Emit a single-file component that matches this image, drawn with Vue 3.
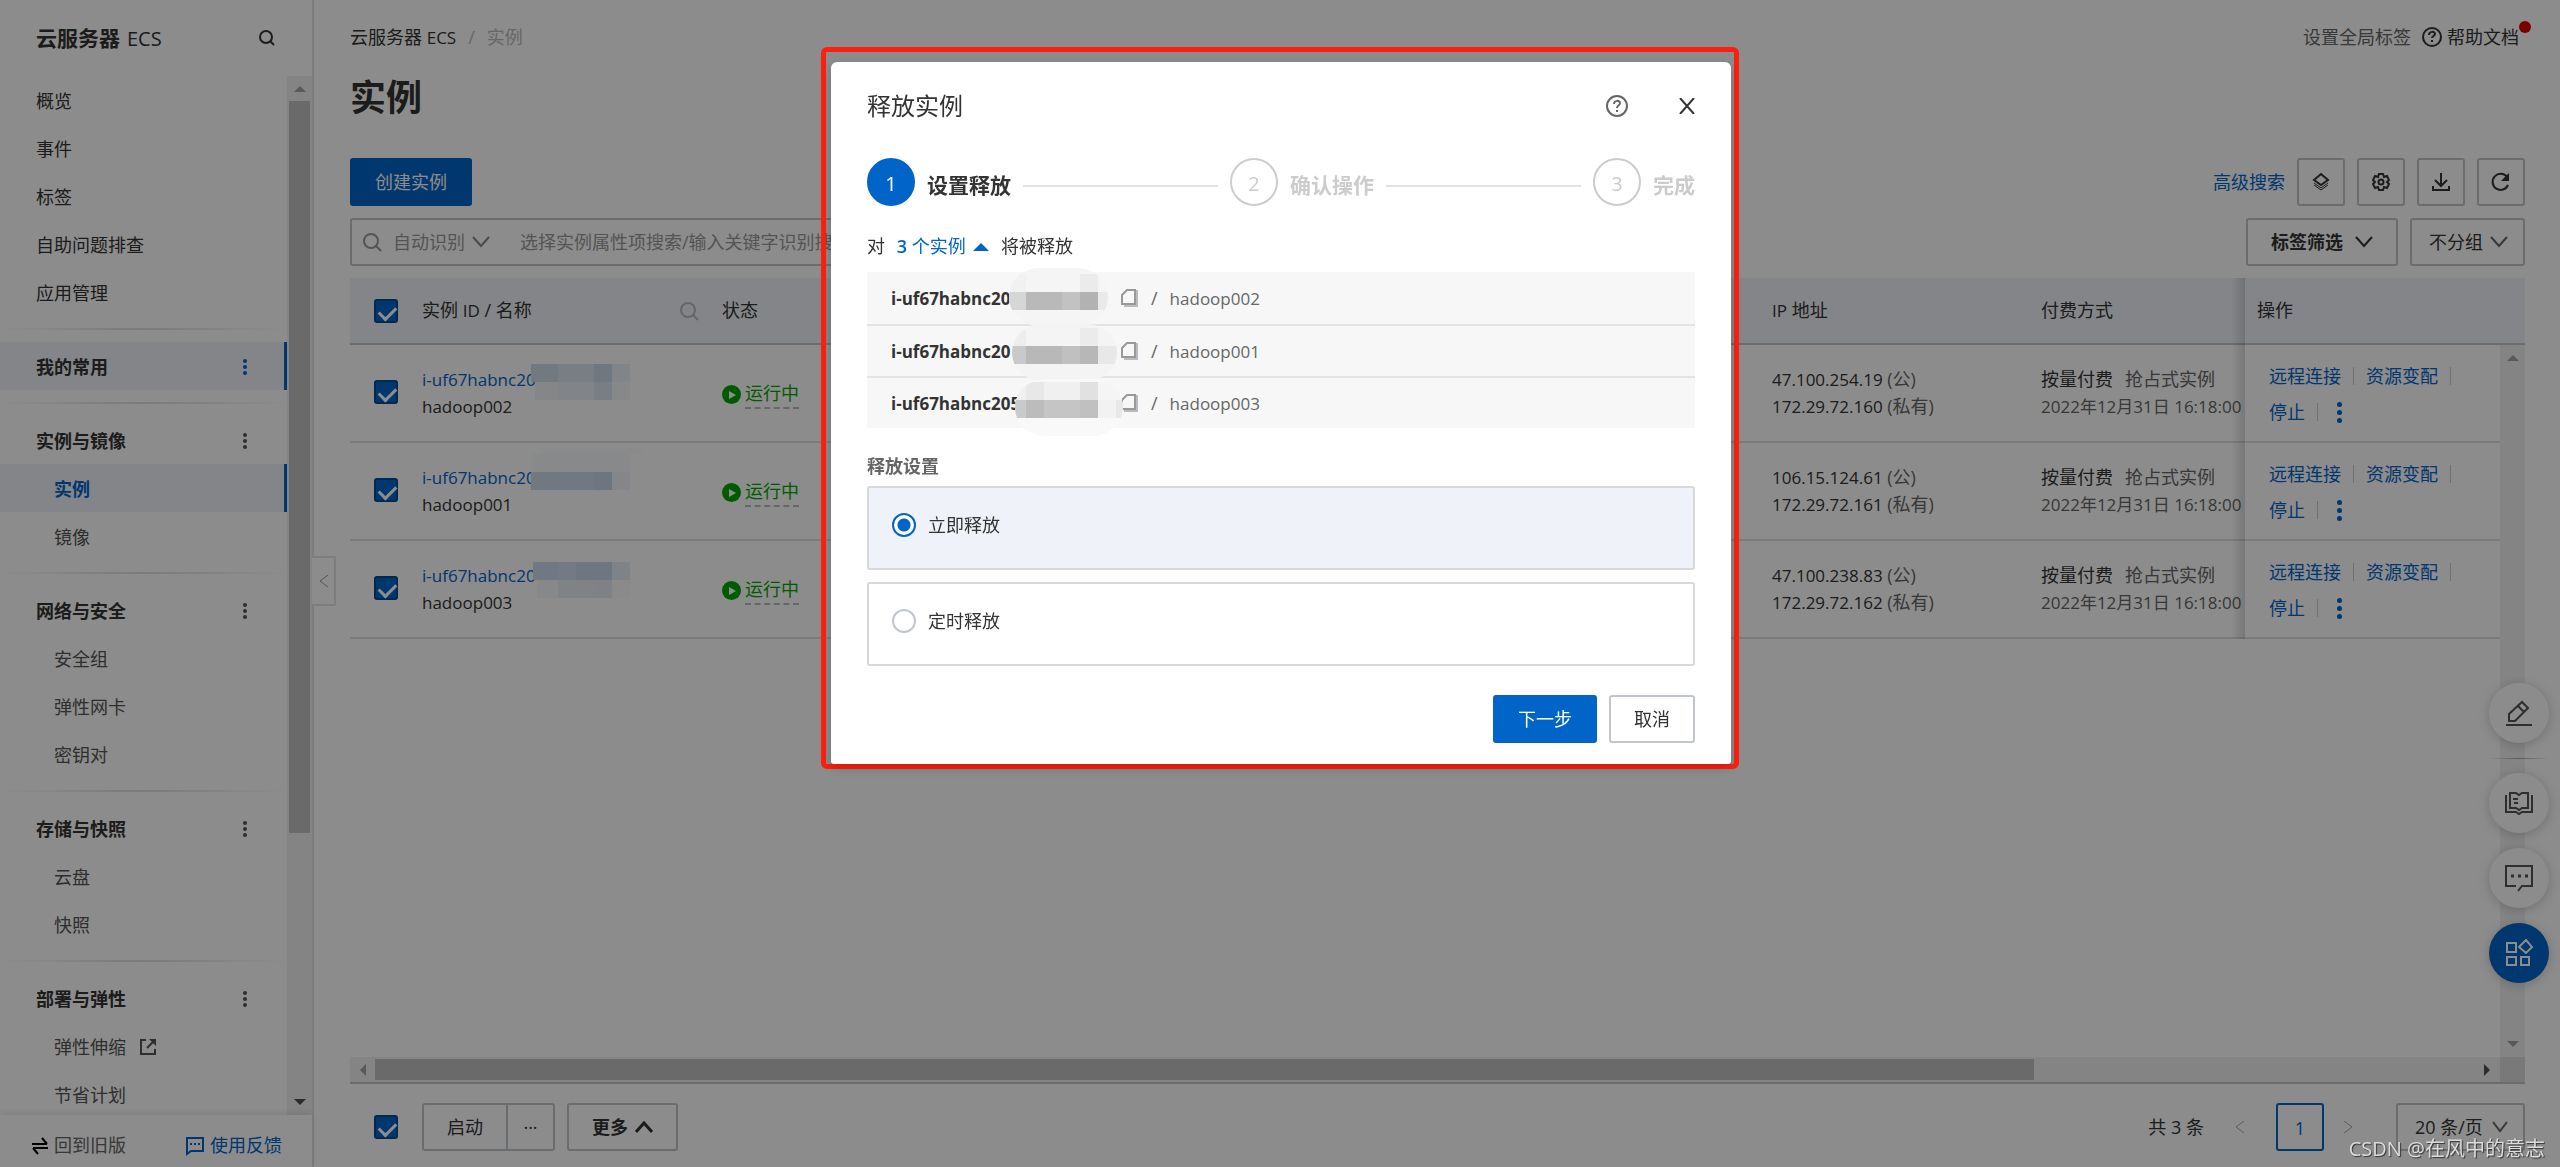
<script setup>
import { ref } from 'vue'

const topLinks = ['概览', '事件', '标签', '自助问题排查', '应用管理']

const groups = [
  { title: '我的常用', active: true, items: [] },
  { title: '实例与镜像', items: [{ name: '实例', active: true }, { name: '镜像' }] },
  { title: '网络与安全', items: [{ name: '安全组' }, { name: '弹性网卡' }, { name: '密钥对' }] },
  { title: '存储与快照', items: [{ name: '云盘' }, { name: '快照' }] },
  { title: '部署与弹性', items: [{ name: '弹性伸缩', external: true }, { name: '节省计划' }] },
]

// Masked id tails: each cell is [x, y, width, height, fill] on the mask canvas.
const instances = ref([
  {
    name: 'hadoop002', publicIp: '47.100.254.19', privateIp: '172.29.72.160', checked: true,
    mask: [
      [0, 19, 27, 18, '#cfdceb'], [27, 19, 36, 18, '#dde5f1'], [63, 19, 18, 18, '#cbdbe9'], [81, 19, 18, 18, '#ebf1f8'],
      [4, 37, 23, 18, '#f0f4f8'], [27, 37, 36, 18, '#ecf1f8'], [63, 37, 18, 18, '#dde6f0'], [81, 37, 18, 18, '#f5f7fb'],
    ],
  },
  {
    name: 'hadoop001', publicIp: '106.15.124.61', privateIp: '172.29.72.161', checked: true,
    mask: [
      [12, 5, 98, 6, '#fcfcfc'], [2, 11, 97, 18, '#f8fafb'],
      [0, 29, 27, 18, '#ccdaea'], [27, 29, 36, 18, '#cfdbec'], [63, 29, 18, 18, '#c6d8e8'], [81, 29, 18, 18, '#f2f5fb'],
    ],
  },
  {
    name: 'hadoop003', publicIp: '47.100.238.83', privateIp: '172.29.72.162', checked: true,
    mask: [
      [2, 21, 25, 18, '#ccdcee'], [27, 21, 18, 18, '#d2dfef'], [45, 21, 36, 18, '#c9d8ea'], [81, 21, 18, 18, '#e6eef6'],
      [6, 39, 21, 18, '#f5f8fa'], [27, 39, 36, 18, '#eaeff4'], [63, 39, 18, 18, '#e6edf4'], [81, 39, 18, 18, '#fbfcfd'],
    ],
  },
])

const releaseList = [
  { id: 'i-uf67habnc20', name: 'hadoop002' },
  { id: 'i-uf67habnc20', name: 'hadoop001' },
  { id: 'i-uf67habnc205', name: 'hadoop003' },
]

const listMask = [
  { x: 0, y: 0, w: 99, h: 58, fill: '#f5f5f5', cells: [
    [0, 6, 17, 18, '#f1f1f1'], [53, 6, 18, 18, '#f5f5f5'], [71, 6, 18, 18, '#ebebeb'],
    [0, 24, 17, 18, '#d6d6d6'], [17, 24, 36, 18, '#b9b9b9'], [53, 24, 18, 18, '#c2c2c2'], [71, 24, 18, 18, '#b2b2b2'], [89, 24, 10, 18, '#e9e9e9'] ] },
  { x: 3, y: 56, w: 105, h: 57, fill: '#f4f4f4', cells: [
    [3, 60, 14, 18, '#ededed'], [71, 60, 18, 18, '#ebebeb'],
    [3, 78, 14, 18, '#c9c9c9'], [17, 78, 36, 18, '#b8b8b8'], [53, 78, 18, 18, '#c0c0c0'], [71, 78, 18, 18, '#b7b7b7'], [89, 78, 19, 18, '#e8e8e8'] ] },
  { x: 6, y: 111, w: 108, h: 57, fill: '#f9f9f9', cells: [
    [6, 114, 11, 18, '#f0f0f0'], [17, 114, 18, 18, '#e8e8e8'], [35, 114, 36, 18, '#f0f0f0'], [71, 114, 18, 18, '#e1e1e1'], [89, 114, 25, 18, '#f5f5f5'],
    [6, 132, 11, 18, '#cacaca'], [17, 132, 18, 18, '#bcbcbc'], [35, 132, 36, 18, '#c5c5c5'], [71, 132, 18, 18, '#c0c0c0'], [89, 132, 18, 18, '#f2f2f2'], [107, 132, 7, 18, '#e8e8e8'] ] },
]

const allChecked = ref(true)
const release = ref('now')
</script>

<template>
  <div class="shell">
    <aside class="sidebar">
      <header class="side-head">
        <strong>云服务器</strong><span class="side-ecs">ECS</span>
        <button class="plain side-search" aria-label="搜索">
          <svg width="18" height="18" viewBox="0 0 18 18" fill="none" stroke="#333" stroke-width="2"><circle cx="8" cy="8" r="6" /><path d="M12 12l4 4" /></svg>
        </button>
      </header>

      <div class="side-body">
        <nav class="nav">
          <a v-for="l in topLinks" :key="l" href="#" class="nav-link">{{ l }}</a>
          <template v-for="g in groups" :key="g.title">
            <div class="divider"></div>
            <div class="nav-title" :class="{ active: g.active }">
              <span>{{ g.title }}</span>
              <button class="plain dots" :aria-label="g.title + ' 更多'"><i></i><i></i><i></i></button>
            </div>
            <a v-for="it in g.items" :key="it.name" href="#" class="nav-link sub" :class="{ active: it.active }">
              {{ it.name }}
              <svg v-if="it.external" width="18" height="18" viewBox="0 0 18 18" fill="none" stroke="#555" stroke-width="2"><path d="M7 2H2v14h14v-5M8 10l7-7" /><path d="M10 1h7v7z" fill="#555" stroke="none" /></svg>
            </a>
          </template>
        </nav>
        <div class="vbar">
          <i class="arr up"></i>
          <div class="vtrack"><div class="vthumb"></div></div>
          <i class="arr down on"></i>
        </div>
      </div>

      <footer class="side-foot">
        <a href="#" class="old">
          <svg width="18" height="18" viewBox="0 0 18 18" fill="none" stroke="#000" stroke-width="2"><path d="M1 7h15M11 1l5 6M17 11H2M7 17l-5-6" /></svg>
          回到旧版
        </a>
        <a href="#" class="feedback">
          <svg width="20" height="20" viewBox="0 0 20 20" fill="none" stroke="#0064c8" stroke-width="2"><path d="M2 2h16v13H6l-4 3z" /><path d="M5 8h2M9 8h2M13 8h2" /></svg>
          使用反馈
        </a>
      </footer>
      <button class="collapse" aria-label="收起">
        <svg width="10" height="14" viewBox="0 0 10 14" fill="none" stroke="#999" stroke-width="1"><path d="M9 1L1 7l8 6" /></svg>
      </button>
    </aside>

    <main class="main">
      <div class="crumbs">
        <a href="#">云服务器 <span class="en">ECS</span></a><span class="sep">/</span><span class="cur">实例</span>
        <div class="help">
          <a href="#" class="muted">设置全局标签</a>
          <svg width="20" height="20" viewBox="0 0 20 20" fill="none" stroke="#333" stroke-width="2"><circle cx="10" cy="10" r="9" /><path d="M7 8c0-4 6-4 6-1 0 2-3 2-3 4M10 13v2" /></svg>
          <a href="#" class="doc">帮助文档<i class="red-dot"></i></a>
        </div>
      </div>

      <h1>实例</h1>

      <div class="bar tools">
        <button class="btn primary">创建实例</button>
        <span class="grow"></span>
        <a href="#" class="blue">高级搜索</a>
        <button class="btn icon" aria-label="标签">
          <svg width="20" height="20" viewBox="0 0 20 20" fill="none" stroke="#333" stroke-width="2"><path d="M10 2l7 6-7 5-7-5z" /><path d="M3 11l7 5 7-5" stroke-width="1" /><path d="M3 13l7 5 7-5" stroke-width="1" /></svg>
        </button>
        <button class="btn icon" aria-label="设置">
          <svg width="20" height="20" viewBox="0 0 20 20" fill="none" stroke="#333" stroke-width="2"><path d="M8 2h4l1 3 3-1 2 4-2 2 2 2-2 4-3-1-1 3H8l-1-3-3 1-2-4 2-2-2-2 2-4 3 1z" /><circle cx="10" cy="10" r="2.500" /></svg>
        </button>
        <button class="btn icon" aria-label="导出">
          <svg width="20" height="20" viewBox="0 0 20 20" fill="none" stroke="#333" stroke-width="2"><path d="M10 1v12M4 8l6 6 6-6M2 14v4h16v-4" /></svg>
        </button>
        <button class="btn icon" aria-label="刷新">
          <svg width="20" height="20" viewBox="0 0 20 20" fill="none" stroke="#333" stroke-width="2"><path d="M17 13a8 8 0 1 1-1-8" /><path d="M18 1v8h-8z" fill="#333" stroke="none" /></svg>
        </button>
      </div>

      <div class="bar">
        <div class="search">
          <svg width="20" height="20" viewBox="0 0 20 20" fill="none" stroke="#999" stroke-width="2"><circle cx="9" cy="9" r="7" /><path d="M14 14l5 5" /></svg>
          <div class="pick auto">
            <select aria-label="搜索方式"><option>自动识别</option></select>
            <svg width="18" height="12" viewBox="0 0 18 12" fill="none" stroke="#888" stroke-width="2"><path d="M1 1l8 9 8-9" /></svg>
          </div>
          <input type="text" aria-label="搜索实例" placeholder="选择实例属性项搜索/输入关键字识别搜索" />
        </div>
        <span class="grow"></span>
        <button class="btn tagf">标签筛选
          <svg width="18" height="12" viewBox="0 0 18 12" fill="none" stroke="#333" stroke-width="2"><path d="M1 1l8 9 8-9" /></svg>
        </button>
        <div class="pick boxed group">
          <select aria-label="分组"><option>不分组</option></select>
          <svg width="18" height="12" viewBox="0 0 18 12" fill="none" stroke="#666" stroke-width="2"><path d="M1 1l8 9 8-9" /></svg>
        </div>
      </div>

      <section class="grid">
        <table>
          <colgroup><col class="c1" /><col class="c2" /><col /><col class="c4" /><col class="c5" /><col class="c6" /><col class="c7" /></colgroup>
          <thead>
            <tr>
              <th class="chk"><input v-model="allChecked" type="checkbox" aria-label="全选" /></th>
              <th>
                <div class="th-id"><span>实例 <span class="en md">ID</span> / 名称</span>
                  <svg width="20" height="20" viewBox="0 0 20 20" fill="none" stroke="#bbb" stroke-width="2"><circle cx="9" cy="9" r="7" /><path d="M14 14l5 5" /></svg>
                </div>
              </th>
              <th>状态</th>
              <th><span class="en md">IP</span> 地址</th>
              <th>付费方式</th>
              <th class="fixed">操作</th>
              <th></th>
            </tr>
          </thead>
          <tbody>
            <tr v-for="r in instances" :key="r.name">
              <td class="chk"><input v-model="r.checked" type="checkbox" :aria-label="r.name" /></td>
              <td class="idcell">
                <a href="#" class="blue en">i-uf67habnc20</a>
                <div class="en">{{ r.name }}</div>
                <svg class="mask" width="110" height="60" viewBox="0 0 110 60" shape-rendering="crispEdges"><rect v-for="(c, i) in r.mask" :key="i" :x="c[0]" :y="c[1]" :width="c[2]" :height="c[3]" :fill="c[4]" /></svg>
              </td>
              <td class="status">
                <svg width="19" height="19" viewBox="0 0 19 19"><circle cx="9.500" cy="9.500" r="9.500" fill="#00a700" /><path d="M7 6l7 4-7 4z" fill="#fff" /></svg>
                <span>运行中</span>
              </td>
              <td class="two">
                <div><span class="en">{{ r.publicIp }}</span> <span class="muted">(公)</span></div>
                <div><span class="en">{{ r.privateIp }}</span> <span class="muted">(私有)</span></div>
              </td>
              <td class="two">
                <div>按量付费<span class="muted spot">抢占式实例</span></div>
                <div class="muted en">2022年12月31日 16:18:00</div>
              </td>
              <td class="fixed ops">
                <div><a href="#">远程连接</a><i></i><a href="#">资源变配</a><i></i></div>
                <div><a href="#">停止</a><i></i><button class="plain dots big" aria-label="更多操作"><i></i><i></i><i></i></button></div>
              </td>
              <td class="gutter"></td>
            </tr>
          </tbody>
        </table>
        <div class="vbar table-v"><i class="arr up"></i><div class="vtrack"></div><i class="arr down"></i></div>
      </section>
      <div class="hbar">
        <i class="arr left"></i>
        <div class="htrack"><div class="hthumb"></div></div>
        <i class="arr right on"></i>
        <b class="corner"></b>
      </div>

      <footer class="foot">
        <input v-model="allChecked" type="checkbox" aria-label="全选本页" />
        <div class="pair"><button class="btn start">启动</button><button class="btn more3" aria-label="更多启动项">···</button></div>
        <button class="btn more">更多
          <svg width="18" height="12" viewBox="0 0 18 12" fill="none" stroke="#333" stroke-width="3"><path d="M1 11l8-9 8 9" /></svg>
        </button>
        <span class="grow"></span>
        <span class="total">共 3 条</span>
        <button class="plain" aria-label="上一页"><svg width="10" height="14" viewBox="0 0 10 14" fill="none" stroke="#aaa" stroke-width="1"><path d="M9 1L1 7l8 6" /></svg></button>
        <button class="btn page">1</button>
        <button class="plain" aria-label="下一页"><svg width="10" height="14" viewBox="0 0 10 14" fill="none" stroke="#aaa" stroke-width="1"><path d="M1 1l8 6-8 6" /></svg></button>
        <div class="pick boxed size">
          <select aria-label="每页条数"><option>20 条/页</option></select>
          <svg width="16" height="12" viewBox="0 0 16 12" fill="none" stroke="#666" stroke-width="2"><path d="M1 1l7 9 7-9" /></svg>
        </div>
      </footer>
    </main>

    <div class="dock">
      <button aria-label="编辑"><svg width="28" height="28" viewBox="0 0 28 28" fill="none" stroke="#555" stroke-width="2"><path d="M4 22v-7L17 3l6 6-13 13zM13 7l6 6M1 26h26" /></svg></button>
      <div class="dock-line"></div>
      <button aria-label="文档"><svg width="28" height="28" viewBox="0 0 28 28" fill="none" stroke="#555" stroke-width="2"><path d="M5 4h6l3 2 3-2h6v15h-6l-3 2-3-2H5z" /><path d="M1 6v17h10l3 2 3-2h10V6M8 10h5M9 14h4" /></svg></button>
      <button aria-label="消息"><svg width="28" height="28" viewBox="0 0 28 28" fill="none" stroke="#555" stroke-width="2"><path d="M11 22H1V2h26v20H17l-4 5" /><path d="M6 12h3M13 12h3M20 12h3" stroke-width="3" /></svg></button>
      <button class="on" aria-label="应用"><svg width="28" height="28" viewBox="0 0 28 28" fill="none" stroke="#fff" stroke-width="2"><path d="M2 4h9v9H2zM2 18h9v8H2zM16 18h8v8h-8zM21 1l6 7-6 6-7-6z" /></svg></button>
    </div>

    <div class="overlay">
      <div class="frame">
        <form class="dialog" role="dialog" aria-labelledby="dlg-title" @submit.prevent>
          <header class="dlg-head">
            <h2 id="dlg-title">释放实例</h2>
            <button type="button" class="plain" aria-label="帮助"><svg width="22" height="22" viewBox="0 0 22 22" fill="none" stroke="#666" stroke-width="2"><circle cx="11" cy="11" r="10" /><path d="M8 9c0-4 6-4 6-1 0 3-3 2-3 5M11 15v2" /></svg></button>
            <button type="button" class="plain close" aria-label="关闭"><svg width="16" height="16" viewBox="0 0 16 16" fill="none" stroke="#333" stroke-width="2"><path d="M1 0l14 16M15 0L1 16" /></svg></button>
          </header>

          <ol class="steps">
            <li class="num on">1</li><li class="lab on">设置释放</li><li class="line"></li>
            <li class="num">2</li><li class="lab">确认操作</li><li class="line"></li>
            <li class="num">3</li><li class="lab">完成</li>
          </ol>

          <p class="sum">对 <a href="#"><b>3</b> 个实例 <i></i></a> 将被释放</p>

          <div class="list">
            <div v-for="r in releaseList" :key="r.name" class="row">
              <b class="en">{{ r.id }}</b>
              <button type="button" class="plain" aria-label="复制"><svg width="18" height="18" viewBox="0 0 18 18" fill="none" stroke="#999" stroke-width="2"><path d="M6 1h8v14H1V6z" /><path d="M16 1v16H3" stroke="#bbb" /></svg></button>
              <span class="slash">/</span><span class="en name">{{ r.name }}</span>
            </div>
            <svg class="list-mask" width="116" height="170" viewBox="0 0 116 170">
              <clipPath v-for="(m, i) in listMask" :id="'m' + i" :key="'c' + i"><rect :x="m.x" :y="m.y" :width="m.w" :height="m.h" rx="30" /></clipPath>
              <g v-for="(m, i) in listMask" :key="'g' + i" :clip-path="'url(#m' + i + ')'">
                <rect :x="m.x" :y="m.y" :width="m.w" :height="m.h" :fill="m.fill" />
                <rect v-for="(c, j) in m.cells" :key="j" :x="c[0]" :y="c[1]" :width="c[2]" :height="c[3]" :fill="c[4]" shape-rendering="crispEdges" />
              </g>
            </svg>
          </div>

          <h3>释放设置</h3>
          <label class="card" :class="{ on: release === 'now' }"><input v-model="release" type="radio" name="release" value="now" />立即释放</label>
          <label class="card" :class="{ on: release === 'timed' }"><input v-model="release" type="radio" name="release" value="timed" />定时释放</label>

          <div class="acts">
            <button type="submit" class="btn primary">下一步</button>
            <button type="button" class="btn">取消</button>
          </div>
        </form>
      </div>
    </div>

    <div class="stamp">CSDN @在风中的意志</div>
  </div>
</template>

<style>
body { overflow: hidden; }
</style>

<style scoped>
* { box-sizing: border-box; margin: 0; padding: 0; }
.shell {
  display: flex; height: 100vh; background: #fff; color: #333; font-size: 18px; line-height: 27px;
  font-family: "Open Sans", "Noto Sans CJK SC", sans-serif;
}
button, input, select { font: inherit; color: inherit; }
button { cursor: pointer; }
a { color: inherit; text-decoration: none; }
svg { display: block; flex: none; }
.en { font-size: 17px; }
.md { font-weight: 500; }
.muted { color: #666; }
.blue { color: #0064c8; }
.grow { flex: 1; }
.plain { border: 0; background: none; display: block; }

.sidebar { position: relative; flex: none; width: 314px; border-right: 2px solid #e4e4e4; display: flex; flex-direction: column; }
.side-head { height: 76px; padding: 0 36px; display: flex; align-items: center; font-size: 21px; gap: 7px; }
.side-ecs { font-size: 20px; }
.side-search { margin-left: auto; }
.side-body { flex: 1; min-height: 0; display: flex; }
.nav { flex: 1; overflow: hidden; }
.nav-link, .nav-title { display: flex; align-items: center; height: 48px; padding: 2px 0 0 36px; }
.nav-title { font-weight: 700; justify-content: space-between; padding-right: 37px; }
.nav-title.active, .nav-link.active { background: #eff3f8; box-shadow: inset -3px 0 #0064c8; }
.nav-link.sub { padding-left: 54px; color: #555; gap: 13px; }
.nav-link.sub.active { color: #0064c8; font-weight: 700; }
.divider { height: 26px; padding: 12px 0; }
.divider::before { content: ""; display: block; height: 2px; background: linear-gradient(90deg, transparent, #dedede 50%, transparent); }
.dots { display: flex; flex-direction: column; gap: 2px; padding: 0 3px; }
.dots i { width: 4px; height: 4px; border-radius: 50%; background: #555; }
.active .dots i, .big i { background: #0064c8; }
.side-foot { height: 52px; display: flex; align-items: center; justify-content: space-between; padding: 9px 30px 0 31px; box-shadow: 0 -2px 6px rgba(0, 0, 0, .1); }
.side-foot a { display: flex; align-items: center; gap: 5px; color: #666; }
.side-foot .feedback { color: #0064c8; }
.collapse { position: absolute; left: 312px; top: 556px; width: 24px; height: 50px; border: 2px solid #e4e4e4; border-left: 0; border-radius: 0 2px 2px 0; background: #fff; padding-left: 7px; }

.vbar { width: 25px; flex: none; background: #f1f1f1; display: flex; flex-direction: column; align-items: center; padding: 10px 0; }
.vtrack { flex: 1; width: 21px; margin: 9px 0; }
.vthumb { height: 74%; background: #c1c1c1; }
.arr { border: 6px solid transparent; }
.arr.up { border-top: 0; border-bottom-color: #a3a3a3; }
.arr.down { border-bottom: 0; border-top-color: #a3a3a3; }
.arr.left { border-left: 0; border-right-color: #a3a3a3; }
.arr.right { border-right: 0; border-left-color: #a3a3a3; }
.arr.down.on { border-top-color: #505050; }
.arr.right.on { border-left-color: #505050; }

.main { flex: 1; min-width: 0; padding: 0 35px 0 36px; display: flex; flex-direction: column; }
.crumbs { height: 74px; display: flex; align-items: center; }
.sep { color: #bbb; margin: 0 12px; }
.cur { color: #bbb; }
.help { margin-left: auto; display: flex; align-items: center; padding-right: 6px; }
.help svg { margin: 0 5px 0 11px; }
.doc { position: relative; }
.red-dot { position: absolute; right: -12px; top: -3px; width: 12px; height: 12px; border-radius: 50%; background: #d00; }
h1 { font-size: 36px; line-height: 48px; }
.bar { display: flex; align-items: center; gap: 12px; margin-top: 12px; }
.tools { margin-top: 36px; }
.btn { height: 48px; border: 2px solid #c0c6cc; border-radius: 3px; background: #fff; padding: 0 23px; display: flex; align-items: center; justify-content: center; white-space: nowrap; }
.btn.primary { border-color: #0064c8; background: #0064c8; color: #fff; }
.btn.icon { width: 48px; padding: 0; }
.search { width: 900px; height: 48px; border: 2px solid #c0c6cc; border-radius: 3px; display: flex; align-items: center; padding-left: 10px; color: #999; }
.search input { flex: 1; border: 0; outline: 0; background: none; }
.search input::placeholder { color: #999; opacity: 1; }
.pick { position: relative; display: flex; align-items: center; }
.pick select { appearance: none; border: 0; background: none; width: 100%; height: 100%; }
.pick svg { position: absolute; right: 15px; pointer-events: none; }
.auto { width: 127px; margin-left: 11px; }
.auto svg { right: 30px; }
.boxed { border: 2px solid #c0c6cc; border-radius: 3px; height: 48px; }
.boxed select { padding-left: 17px; }
.group { width: 115px; }
.tagf { font-weight: 700; gap: 12px; }

.grid { flex: 1; min-height: 0; margin-top: 12px; position: relative; overflow: hidden; }
table { width: 100%; table-layout: fixed; border-spacing: 0; }
.c1 { width: 72px; } .c2 { width: 300px; } .c4 { width: 269px; } .c5 { width: 204px; } .c6 { width: 255px; } .c7 { width: 25px; }
th { height: 67px; background: #eff3f8; border-bottom: 2px solid #c0c6cc; text-align: left; font-weight: 400; }
td { height: 98px; border-bottom: 2px solid #e0e0e0; vertical-align: top; white-space: nowrap; }
td.gutter { border: 0; }
.chk { padding-left: 24px; }
td.chk { padding-top: 35px; }
.th-id { display: flex; align-items: center; justify-content: space-between; padding-right: 23px; }
.idcell { position: relative; padding-top: 21px; }
.idcell a { display: block; }
.mask { position: absolute; left: 109px; top: 0; }
.status { padding-top: 35px; color: #00a700; }
.status svg { display: inline-block; vertical-align: -4px; margin-right: 4px; }
.status span { display: inline-block; border-bottom: 2px dashed #bbb; }
.two { padding-top: 21px; }
.spot { margin-left: 12px; }
.fixed { position: relative; background: #fff; }
th.fixed { padding-left: 12px; background: #eff3f8; }
.fixed::before { content: ""; position: absolute; right: 100%; top: 0; bottom: -2px; width: 14px; background: linear-gradient(270deg, rgba(0, 0, 0, .14), transparent); }
.ops { padding: 13px 0 0 24px; color: #0064c8; }
.ops div { display: flex; align-items: center; height: 36px; }
.ops div > i { width: 1px; height: 18px; background: #ccc; margin: 0 12px; }
.ops .big { gap: 3px; padding: 0 7px; }
.big i { width: 5px; height: 5px; }
.table-v { position: absolute; right: 0; top: 67px; bottom: 0; }

input[type="checkbox"] { appearance: none; display: block; flex: none; width: 24px; height: 24px; border: 2px solid #004a94; border-radius: 3px; background: #0064c8; padding: 5px 0 0 3px; }
input[type="checkbox"]:checked::before { content: ""; display: block; width: 14px; height: 8px; border: solid #fff; border-width: 0 0 3px 3px; transform: rotate(-45deg); }

.hbar { height: 27px; flex: none; border-bottom: 2px solid #c0c6cc; background: #f1f1f1; display: flex; align-items: center; padding-left: 10px; }
.htrack { flex: 1; height: 21px; margin: 0 9px; }
.hthumb { width: 79%; height: 21px; background: #c1c1c1; }
.corner { width: 25px; height: 25px; margin-left: 10px; background: #dcdcdc; }
.foot { display: flex; align-items: center; padding: 19px 0 16px 24px; }
.pair { display: flex; margin: 0 12px 0 24px; }
.start { width: 86px; border-radius: 3px 0 0 3px; }
.more3 { border-radius: 0 3px 3px 0; border-left: 0; width: 47px; padding: 0; }
.more { font-weight: 700; gap: 7px; }
.total { margin-right: 31px; }
.page { width: 48px; border-color: #0064c8; color: #0064c8; padding: 2px 0 0; margin: 0 19px 0 31px; }
.size { width: 129px; margin-left: 43px; }

.dock { position: fixed; right: 11px; bottom: 184px; display: flex; flex-direction: column; gap: 15px; }
.dock button { width: 60px; height: 60px; border: 0; border-radius: 50%; background: #fff; box-shadow: 0 2px 12px rgba(0, 0, 0, .2); padding: 16px; }
.dock button.on { background: #0064c8; }
.dock-line { height: 1px; margin-bottom: -1px; background: linear-gradient(90deg, transparent, #aaa, transparent); }

.overlay { position: fixed; inset: 0; background: rgba(0, 0, 0, .45); display: flex; justify-content: center; align-items: flex-start; padding-top: 47px; overflow: hidden; }
.frame { width: 918px; border: 5px solid #ff1f10; border-radius: 6px; padding: 10px 3px 0 5px; }
.dialog { background: #fff; border-radius: 6px 6px 3px 3px; padding: 23px 36px 21px; box-shadow: 0 4px 12px rgba(0, 0, 0, .2); }
.dlg-head { display: flex; align-items: center; height: 42px; }
h2 { font-size: 24px; font-weight: 400; line-height: 42px; flex: 1; }
.close { margin-left: 51px; }
.steps { list-style: none; display: flex; align-items: center; gap: 12px; margin-top: 31px; color: #ccc; }
.num { width: 48px; height: 48px; border: 2px solid #ccc; border-radius: 50%; text-align: center; font-size: 20px; line-height: 48px; }
.num.on { background: #0064c8; border-color: #0064c8; color: #fff; }
.lab { font-size: 21px; font-weight: 700; margin-top: 6px; }
.lab.on { color: #333; }
.line { flex: 1; height: 2px; background: #e3e3e3; margin-top: 8px; }
.sum { margin-top: 27px; }
.sum a { color: #0064c8; margin: 0 7px; }
.sum b { font-weight: 600; }
.sum i { display: inline-block; border: 8px solid transparent; border-top: 0; border-bottom-color: #0064c8; vertical-align: 2px; margin-left: 3px; }
.list { position: relative; margin-top: 12px; background: #f7f7f7; }
.row { display: flex; align-items: center; height: 52px; padding-left: 24px; }
.row + .row { border-top: 2px solid #e3e3e3; }
.row b { width: 230px; }
.slash { margin: 0 12px; color: #666; }
.name { color: #666; }
.list-mask { position: absolute; left: 142px; top: -4px; }
h3 { font-size: 18px; line-height: 27px; color: #666; margin: 25px 0 6px; }
.card { display: flex; gap: 12px; height: 84px; border: 2px solid #d8d8d8; border-radius: 3px; padding: 25px 23px 0 23px; line-height: 24px; }
.card + .card { margin-top: 12px; }
.card.on { background: #eff2f8; }
input[type="radio"] { appearance: none; width: 24px; height: 24px; border: 2px solid #c0c6cc; border-radius: 50%; background: #fff; }
input[type="radio"]:checked { border-color: #0064c8; background: radial-gradient(circle, #0064c8 6px, #fff 7px); }
.acts { display: flex; justify-content: flex-end; gap: 12px; margin-top: 29px; }

.stamp { position: fixed; right: 15px; bottom: 5px; font-size: 20px; color: #dcdcdc; text-shadow: 1px 1px 1px #333; }
</style>
